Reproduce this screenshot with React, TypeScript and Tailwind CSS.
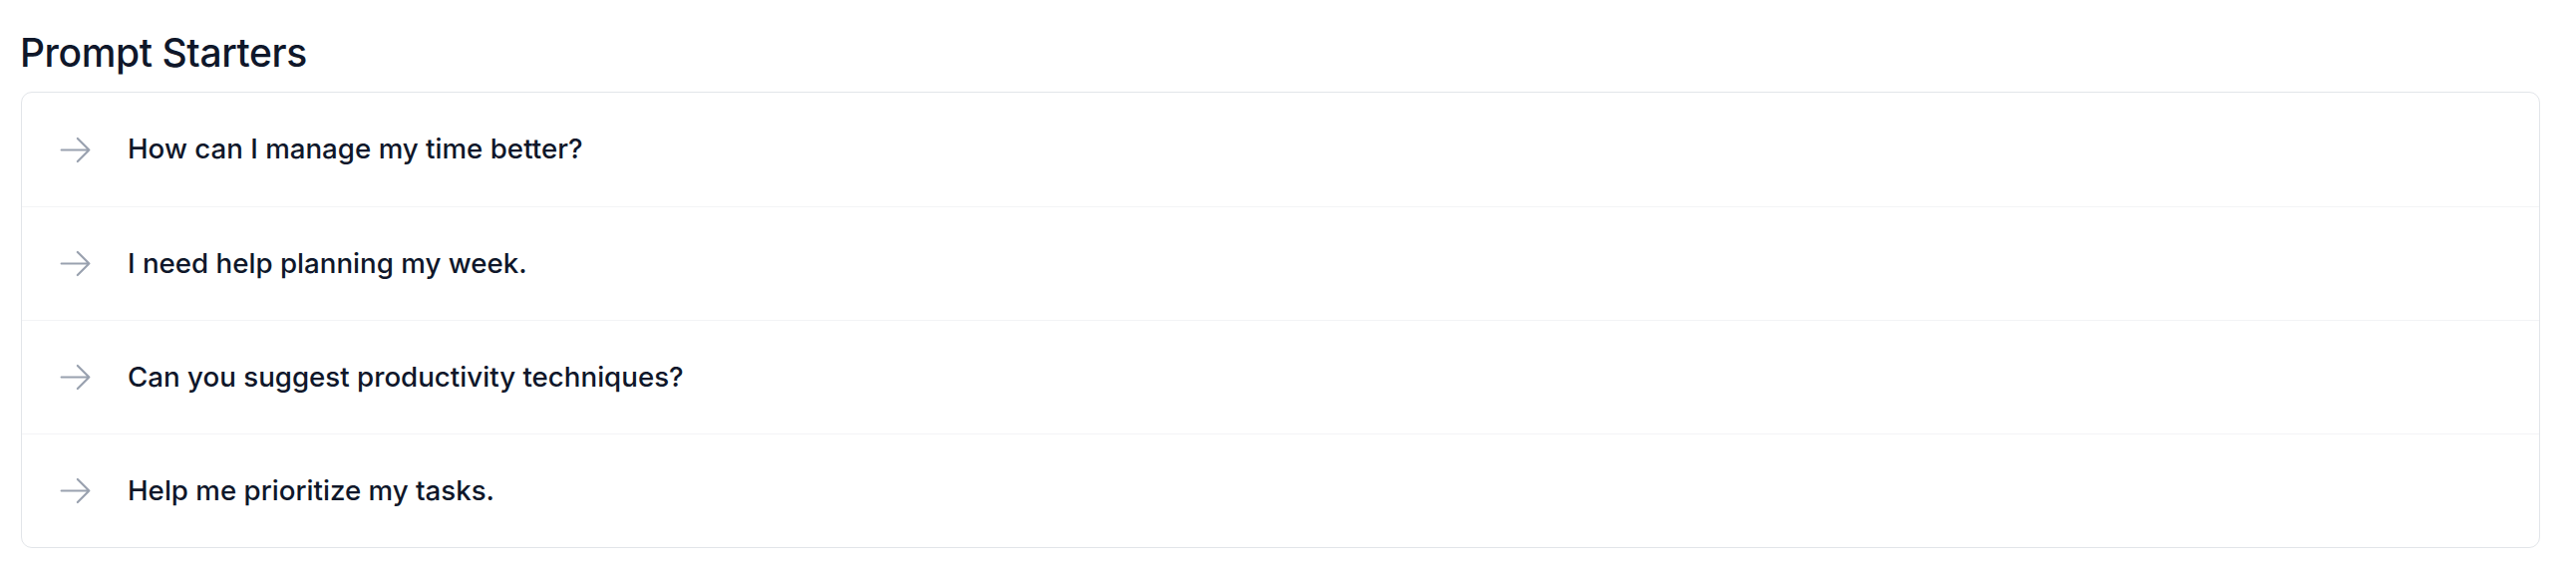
const starters = [
  "How can I manage my time better?",
  "I need help planning my week.",
  "Can you suggest productivity techniques?",
  "Help me prioritize my tasks.",
]

function ArrowIcon() {
  return (
    <svg
      xmlns="http://www.w3.org/2000/svg"
      fill="none"
      viewBox="0 0 24 24"
      strokeWidth={1.4}
      stroke="currentColor"
      className="w-[37px] h-[37px] shrink-0 text-gray-400"
    >
      <path strokeLinecap="round" strokeLinejoin="round" d="M13.5 4.5 21 12m0 0-7.5 7.5M21 12H3" />
    </svg>
  )
}

export default function App() {
  return (
    <div
      className="w-full bg-white pl-[21px] pr-[36px] pt-[30px]"
      style={{ fontFamily: "Inter, 'Noto Sans', sans-serif" }}
    >
      <h2 className="text-[39px] leading-[46px] font-medium text-[#0f172a] tracking-[-0.4px] ml-[-1px]">Prompt Starters</h2>
      <div className="mt-[16px] border border-[#e2e5e9] rounded-[11px] overflow-hidden bg-white">
        {starters.map((text, i) => (
          <div
            key={text}
            className={`flex items-center h-[114px] pl-[35px] gap-[34px] ${i > 0 ? "border-t border-[#f3f4f6]" : ""}`}
          >
            <ArrowIcon />
            <span className="text-[27.7px] font-medium text-[#0f172a]">{text}</span>
          </div>
        ))}
      </div>
    </div>
  )
}
